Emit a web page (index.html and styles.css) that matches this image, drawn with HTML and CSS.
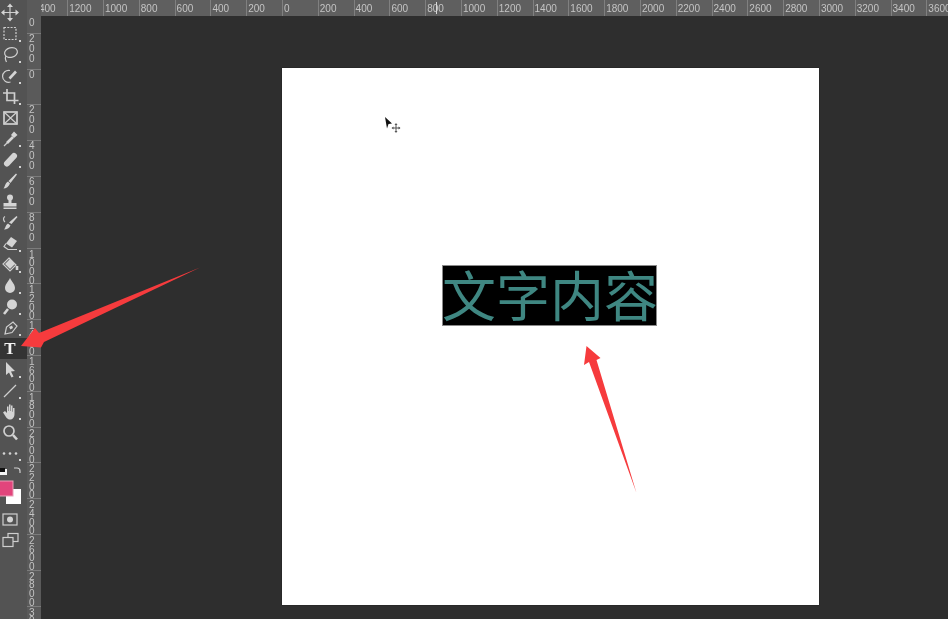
FILE: index.html
```html
<!DOCTYPE html>
<html>
<head>
    <title>文字内容</title>
    <link rel="stylesheet" href="styles.css">
</head>
<body>
    <div class="toolbar">
        <div class="tool"><svg viewBox="0 0 27 21"><path class="line" d="M10 4v13M3.500 10.500h13"/><path class="fill" d="M10 1.500l3 3.500h-6zM10 19.500l3-3.500h-6zM1 10.500l3.500-3v6zM19 10.500l-3.500-3v6z"/></svg></div>
        <div class="tool"><svg viewBox="0 0 27 21"><rect class="line" x="4" y="4.500" width="12" height="12" stroke-dasharray="2 1.300"/><rect class="fill" x="19" y="17" width="2" height="2"/></svg></div>
        <div class="tool"><svg viewBox="0 0 27 21"><ellipse class="line" cx="11" cy="8.500" rx="6.500" ry="4.800" transform="rotate(-15 11 8.500)"/><path class="line" d="M6 12c-1.500 2-.5 4 .5 6"/><rect class="fill" x="19" y="17" width="2" height="2"/></svg></div>
        <div class="tool"><svg viewBox="0 0 27 21"><path class="line" d="M10 5.500a6 6 0 1 0 .5 11.500"/><path class="thick" d="M9.500 13.500L16 6.500"/><rect class="fill" x="19" y="17" width="2" height="2"/></svg></div>
        <div class="tool"><svg viewBox="0 0 27 21"><path class="wide" d="M7 3v11.500h11.500M3 7h11.500v11"/><rect class="fill" x="19" y="17" width="2" height="2"/></svg></div>
        <div class="tool"><svg viewBox="0 0 27 21"><rect class="wide" x="4" y="5" width="13" height="12"/><path class="line" d="M4 5l13 12M17 5L4 17"/></svg></div>
        <div class="tool"><svg viewBox="0 0 27 21"><path class="line" d="M4 18l8-8"/><path class="thick" d="M7 15l6-6"/><path class="fill" d="M11 7l3-3.500 3.500 3.500-3.500 3z"/><rect class="fill" x="19" y="17" width="2" height="2"/></svg></div>
        <div class="tool"><svg viewBox="0 0 27 21"><path class="heal" d="M7 14.500l7-7.500"/><rect class="fill" x="19" y="17" width="2" height="2"/></svg></div>
        <div class="tool"><svg viewBox="0 0 27 21"><path class="fill" d="M16 3.500l1 1-6.500 8.500-2-2zM8 11.500l2 2c-1 3-4 5-6.500 5 1.500-1.500 1.500-5.500 4.500-7z"/></svg></div>
        <div class="tool"><svg viewBox="0 0 27 21"><circle class="fill" cx="10" cy="6.500" r="3"/><path class="fill" d="M8.500 8h3v4h5v3.500h-13V12h5zM3.500 16.500h13v1.500h-13z"/></svg></div>
        <div class="tool"><svg viewBox="0 0 27 21"><path class="fill" d="M16.500 4l1 1-6 7-2.500-1.500zM8 11.500l2.500 2c-1 2.500-3.500 4-6.500 4 1.500-1.500 1.500-4.500 4-6z"/><path class="line" d="M5 4.500c-2 1-2 4 0 5.500"/></svg></div>
        <div class="tool"><svg viewBox="0 0 27 21"><path class="fill" d="M11 4l6 4-5 6.500-6-4z"/><path class="line" d="M6 10.500l-2 3 4 3h9"/><rect class="fill" x="19" y="17" width="2" height="2"/></svg></div>
        <div class="tool"><svg viewBox="0 0 27 21"><path class="line" d="M9 4l7 7-6 6-7-7z"/><path class="fill" d="M5 10l5-5 5 5-5 5z"/><path class="thick" d="M17 12v4"/><rect class="fill" x="19" y="17" width="2" height="2"/></svg></div>
        <div class="tool"><svg viewBox="0 0 27 21"><path class="fill" d="M10 3c2 4 5 6.500 5 10a5 5 0 0 1-10 0c0-3.500 3-6 5-10z"/><rect class="fill" x="19" y="17" width="2" height="2"/></svg></div>
        <div class="tool"><svg viewBox="0 0 27 21"><circle class="fill" cx="12" cy="8.500" r="5"/><path class="thick" d="M8 13l-4 5"/><rect class="fill" x="19" y="17" width="2" height="2"/></svg></div>
        <div class="tool"><svg viewBox="0 0 27 21"><path class="line" d="M5 17l1.500-7L13 5l4 4-5 6.500z"/><path class="fill" d="M9 10l3-1.500 1 2.500-2.500 1.500z"/><rect class="fill" x="19" y="17" width="2" height="2"/></svg></div>
        <div class="tool active"><span class="type-glyph">T</span></div>
        <div class="tool"><svg viewBox="0 0 27 21"><path class="fill" d="M6 3l9 9-4 .5 2.500 5-2 1-2.500-5L6 16z"/><rect class="fill" x="19" y="17" width="2" height="2"/></svg></div>
        <div class="tool"><svg viewBox="0 0 27 21"><path class="line" d="M4 17L16 5"/><rect class="fill" x="19" y="17" width="2" height="2"/></svg></div>
        <div class="tool"><svg viewBox="0 0 27 21"><path class="fill" d="M5 10l2 2V5.500h1.500V10H9V3.500h1.500V10h.5V4.500h1.500V10.500l.5.500V7h1.500v6c0 3.500-2 5.500-4.500 5.500-3 0-3.500-2-7-7z"/><rect class="fill" x="19" y="17" width="2" height="2"/></svg></div>
        <div class="tool"><svg viewBox="0 0 27 21"><circle class="wide" cx="9" cy="9" r="5"/><path class="thick" d="M13 13l4 4.500"/></svg></div>
        <div class="tool"><svg viewBox="0 0 27 21"><circle class="fill" cx="4" cy="10.500" r="1.300"/><circle class="fill" cx="10" cy="10.500" r="1.300"/><circle class="fill" cx="16" cy="10.500" r="1.300"/><rect class="fill" x="19" y="16" width="2" height="2"/></svg></div>
        <svg class="swatches" viewBox="0 0 27 45">
            <rect x="0" y="5" width="7" height="6" fill="#f4f4f4"/><rect x="0" y="4" width="5" height="4" fill="#111"/>
            <path class="line" d="M14 4h3c1.500 0 3 1 3 3v2"/>
            <rect x="6" y="25" width="15" height="15" fill="#fff"/>
            <rect x="-1" y="17" width="14" height="15" fill="#e2457c" stroke="#e8a0b8"/>
        </svg>
        <div class="tool"><svg viewBox="0 0 27 21"><rect class="line" x="3" y="5" width="14" height="11"/><circle class="fill" cx="10" cy="10.500" r="3"/></svg></div>
        <div class="tool"><svg viewBox="0 0 27 21"><rect class="line" x="8" y="3.500" width="10" height="8"/><rect x="3" y="7.500" width="10" height="9" fill="#535353" stroke="#cfcfcf" stroke-width="1.200"/></svg></div>
    </div>

    <div class="workspace">
        <div class="ruler-top">
            <div class="ruler-corner"></div>
            <div class="ruler-h">
                <span>1400</span><span>1200</span><span>1000</span><span>800</span><span>600</span><span>400</span><span>200</span><span>0</span><span>200</span><span>400</span><span>600</span><span>800</span><span>1000</span><span>1200</span><span>1400</span><span>1600</span><span>1800</span><span>2000</span><span>2200</span><span>2400</span><span>2600</span><span>2800</span><span>3000</span><span>3200</span><span>3400</span><span>3600</span>
            </div>
            <i class="mouse-mark"></i>
        </div>
        <div class="main">
            <div class="ruler-v">
                <span>400</span><span>200</span><span>0</span><span>200</span><span>400</span><span>600</span><span>800</span><span class="four">1000</span><span class="four">1200</span><span class="four">1400</span><span class="four">1600</span><span class="four">1800</span><span class="four">2000</span><span class="four">2200</span><span class="four">2400</span><span class="four">2600</span><span class="four">2800</span><span class="four">3000</span>
            </div>
            <div class="canvas">
                <div class="doc">
                    <div class="text-box">文字内容</div>
                </div>
            </div>
        </div>
    </div>

    <!-- 커서, 빨간 화살표 -->
    <svg class="overlay" viewBox="0 0 948 619">
        <path fill="#111" d="M385 117l7 6.500-3.500.5-1.500 4.500z"/>
        <path fill="none" stroke="#555" d="M396 124.500v7.500M392.500 128h7.500"/>
        <path fill="#555" d="M396 123l1.500 2h-3zM396 133l1.500-2h-3zM391.500 128l2-1.500v3zM400.500 128l-2-1.500v3z"/>
        <path fill="#f63b3d" d="M200 267.500L39 333l-4-5-14 18 20 1.500 3-5.500z"/>
        <path fill="#f63b3d" d="M636.500 493L589 362l-5 3 2.500-19 14 12-4 2z"/>
    </svg>
</body>
</html>
```

FILE: styles.css
```css
html, body { margin: 0; padding: 0; }
body { width: 948px; height: 619px; overflow: hidden; display: flex; background: #2e2e2e; font-family: "Liberation Sans", Arial, sans-serif; }

.toolbar { width: 27px; flex: none; padding-top: 1.5px; box-sizing: border-box; background: #535353; filter: blur(.6px); }
.tool { height: 21px; display: flex; align-items: center; justify-content: center; }
.tool svg { width: 27px; height: 21px; display: block; }
.tool.active { background: #343434; }
.type-glyph { width: 20px; text-align: center; margin-right: 7px; color: #f2f2f2; font: bold 17px/21px "Liberation Serif", serif; }
.swatches { width: 27px; height: 45px; display: block; }

.line { fill: none; stroke: #cfcfcf; stroke-width: 1.2; }
.wide { fill: none; stroke: #cfcfcf; stroke-width: 1.7; }
.thick { fill: none; stroke: #d4d4d4; stroke-width: 2.6; }
.heal { fill: none; stroke: #d4d4d4; stroke-width: 6; stroke-linecap: round; }
.fill { fill: #d4d4d4; }

.workspace { flex: 1; min-width: 0; display: flex; flex-direction: column; }

.ruler-top { height: 16px; flex: none; display: flex; position: relative; }
.ruler-corner { width: 14px; flex: none; background: #5a5a5a; }
.ruler-h { flex: 1; min-width: 0; display: flex; overflow: hidden; background: #5f5f5f; filter: blur(.5px); }
.ruler-h span { flex: none; width: 35.8px; box-sizing: border-box; height: 16px; padding: 3px 0 0 1px; font-size: 10px; line-height: 12px; color: #c4c4c4; border-left: 1px solid #808080; }
.ruler-h span:first-child { margin-left: -9.6px; }
.mouse-mark { position: absolute; left: 408.500px; top: 2px; width: 1px; height: 12px; background: #d8d8d8; }

.main { flex: 1; min-height: 0; display: flex; }
.ruler-v { width: 14px; flex: none; overflow: hidden; background: #5a5a5a; filter: blur(.5px); }
.ruler-v span { display: block; width: 14px; height: 35.8px; box-sizing: border-box; padding: 0 6px 0 2px; font-size: 10px; line-height: 10px; color: #c4c4c4; border-top: 1px solid #7c7c7c; word-break: break-all; }
.ruler-v span.four { padding-top: 2px; line-height: 8.7px; }
.ruler-v span:first-child { margin-top: -19px; }

.canvas { flex: 1; min-width: 0; padding: 52px 0 0 241px; background: #2e2e2e; }
.doc { width: 537px; height: 537px; box-sizing: border-box; padding: 197px 2px 0 0; display: flex; justify-content: center; align-items: flex-start; background: #fff; box-shadow: 0 0 1px #111; }
.text-box { height: 61px; width: 215px; overflow: hidden; white-space: nowrap; text-align: center; background: #000; outline: 1px solid #8a8a8a; outline-offset: -1px; color: #3f8782; font-family: "Noto Sans CJK SC", sans-serif; font-size: 54px; line-height: 57px; }

.overlay { position: absolute; left: 0; top: 0; width: 948px; height: 619px; pointer-events: none; }
```
